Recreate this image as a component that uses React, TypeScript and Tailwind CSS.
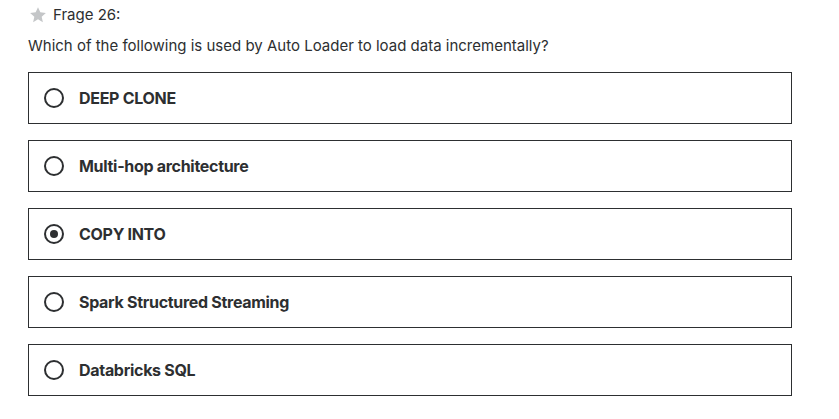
const options = [
  "DEEP CLONE",
  "Multi-hop architecture",
  "COPY INTO",
  "Spark Structured Streaming",
  "Databricks SQL",
];

export default function App() {
  const selected = 2;
  return (
    <div className="w-[839px] h-[419px] bg-white text-[#2d2f31] font-['Inter','Noto_Sans',sans-serif] overflow-hidden">
      <div className="pl-[28px] pr-[47px] pt-[4px]">
        {/* header */}
        <div className="flex items-center gap-[6px] h-[22px] pl-[1px]">
          <svg width="18" height="18" viewBox="0 0 24 24" className="text-[#c4c6c8]">
            <path
              fill="currentColor"
              d="M12 1.5l3.1 6.9 7.4.8-5.6 5 1.6 7.4L12 17.8l-6.5 3.8 1.6-7.4-5.6-5 7.4-.8z"
            />
          </svg>
          <span className="text-[15px]">Frage 26:</span>
        </div>
        <p className="text-[15px] mt-[9px] leading-[22px]">
          Which of the following is used by Auto Loader to load data incrementally?
        </p>

        {/* options */}
        <div className="flex flex-col gap-[16px] mt-[15px]">
          {options.map((o, i) => (
            <div
              key={o}
              className="h-[52px] border border-[#2d2f31] flex items-center pl-[15px]"
            >
              <span className="w-[20px] h-[20px] rounded-full border-2 border-[#2d2f31] flex items-center justify-center">
                {i === selected && <span className="w-[8px] h-[8px] rounded-full bg-[#2d2f31]" />}
              </span>
              <span className="ml-[15px] text-[16px] font-bold tracking-[-0.3px]">{o}</span>
            </div>
          ))}
        </div>
      </div>
    </div>
  );
}
